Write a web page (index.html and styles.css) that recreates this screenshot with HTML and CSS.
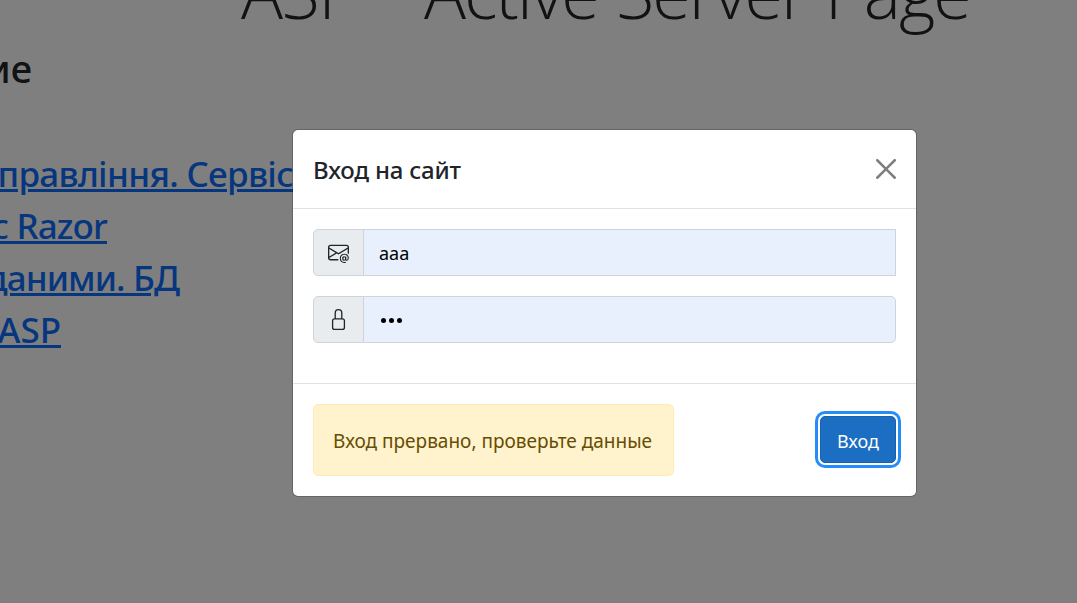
FILE: index.html
```html
<!DOCTYPE html>
<html lang="ru">
<head>
<meta charset="utf-8">
<title>ASP</title>
<link rel="stylesheet" href="styles.css">
</head>
<body>
<main class="page">
  <h1 class="display"><span class="display-abbr">ASP</span><span class="display-name">Active Server Page</span></h1>
  <h2 class="subtitle">ие</h2>
  <nav class="topics">
    <a class="topic topic-services" href="#">управління. Сервіс</a>
    <a class="topic topic-razor" href="#">с Razor</a>
    <a class="topic topic-data" href="#">даними. БД</a>
    <a class="topic topic-asp" href="#">ASP</a>
  </nav>
</main>
<div class="backdrop">
  <section class="modal">
    <header class="modal-header">
      <h5 class="modal-title">Вход на сайт</h5>
      <svg class="close" viewBox="0 0 16 16"><path d="M.293.293a1 1 0 0 1 1.414 0L8 6.586 14.293.293a1 1 0 1 1 1.414 1.414L9.414 8l6.293 6.293a1 1 0 0 1-1.414 1.414L8 9.414l-6.293 6.293a1 1 0 0 1-1.414-1.414L6.586 8 .293 1.707a1 1 0 0 1 0-1.414z"/></svg>
    </header>
    <div class="modal-body">
      <div class="input-group">
        <span class="addon"><svg class="icon" viewBox="0 0 16 16"><path d="M2 2a2 2 0 0 0-2 2v8.01A2 2 0 0 0 2 14h5.5a.5.5 0 0 0 0-1H2a1 1 0 0 1-.966-.741l5.64-3.471L8 9.583l7-4.2V8.5a.5.5 0 0 0 1 0V4a2 2 0 0 0-2-2H2Zm3.708 6.208L1 11.105V5.383l4.708 2.825ZM1 4.217V4a1 1 0 0 1 1-1h12a1 1 0 0 1 1 1v.217l-7 4.2-7-4.2Z"/><path d="M14.247 14.269c1.01 0 1.587-.857 1.587-2.025v-.21C15.834 10.43 14.64 9 12.52 9h-.035C10.42 9 9 10.36 9 12.432v.214C9 14.82 10.438 16 12.358 16h.044c.594 0 1.018-.074 1.237-.175v-.73c-.245.11-.673.18-1.18.18h-.044c-1.334 0-2.571-.788-2.571-2.655v-.157c0-1.657 1.058-2.724 2.64-2.724h.04c1.535 0 2.484 1.05 2.484 2.326v.118c0 .975-.324 1.39-.639 1.39-.232 0-.41-.148-.41-.42v-2.19h-.906v.569h-.03c-.084-.298-.368-.63-.954-.63-.778 0-1.259.555-1.259 1.4v.528c0 .892.49 1.434 1.26 1.434.471 0 .896-.227 1.014-.643h.043c.118.42.617.648 1.12.648Zm-2.453-1.588v-.227c0-.546.227-.791.573-.791.297 0 .572.192.572.708v.367c0 .573-.253.744-.564.744-.354 0-.581-.215-.581-.8Z"/></svg></span>
        <span class="field field-square">aaa</span>
      </div>
      <div class="input-group">
        <span class="addon"><svg class="icon" viewBox="0 0 16 16"><path d="M8 1a2 2 0 0 1 2 2v4H6V3a2 2 0 0 1 2-2zm3 6V3a3 3 0 0 0-6 0v4a2 2 0 0 0-2 2v5a2 2 0 0 0 2 2h6a2 2 0 0 0 2-2V9a2 2 0 0 0-2-2zM5 8h6a1 1 0 0 1 1 1v5a1 1 0 0 1-1 1H5a1 1 0 0 1-1-1V9a1 1 0 0 1 1-1z"/></svg></span>
        <span class="field field-password"><i class="dot"></i><i class="dot"></i><i class="dot"></i></span>
      </div>
    </div>
    <footer class="modal-footer">
      <div class="alert"><span class="alert-text">Вход прервано, проверьте данные</span></div>
      <button class="submit">Вход</button>
    </footer>
  </section>
</div>
</body>
</html>
```
FILE: styles.css
```css
* { box-sizing: border-box; }
body {
  margin: 0;
  width: 1077px;
  height: 603px;
  overflow: hidden;
  background: #fff;
  color: #212529;
  font: 18px/1.5 "Noto Sans", "Open Sans", sans-serif;
}
.page { width: 1077px; height: 603px; overflow: hidden; }
.display {
  display: flex;
  margin: -64px 0 0 241px;
  height: 112px;
  line-height: 112px;
  font-family: "Open Sans", sans-serif;
  font-size: 70px;
  font-weight: 300;
  letter-spacing: -1.9px;
  word-spacing: 2px;
  white-space: nowrap;
}
.display-abbr { width: 183px; letter-spacing: -1.5px; }
.subtitle {
  display: flex;
  justify-content: flex-end;
  width: 32px;
  height: 56px;
  margin: -8px 0 0;
  line-height: 56px;
  font-size: 38px;
  font-weight: 500;
}
.topics {
  display: flex;
  flex-direction: column;
  margin-top: 52px;
  font-size: 35px;
  font-weight: 500;
  letter-spacing: -.9px;
}
.topic {
  display: flex;
  justify-content: flex-end;
  height: 52px;
  line-height: 52px;
  color: #0d6efd;
  white-space: nowrap;
  text-decoration: underline;
  text-decoration-thickness: 3px;
}
.topic-services { width: 293px; letter-spacing: -.7px; }
.topic-razor { width: 107px; }
.topic-data { width: 179px; }
.topic-asp { width: 61px; letter-spacing: 0; }
.backdrop {
  position: absolute;
  top: 0;
  left: 0;
  width: 1077px;
  height: 603px;
  padding: 129px 0 0 292px;
  background: rgba(0, 0, 0, .5);
}
.modal {
  width: 625px;
  height: 368px;
  background: #fff;
  background-clip: padding-box;
  border: 1px solid rgba(0, 0, 0, .2);
  border-radius: 6px;
}
.modal-header {
  display: flex;
  align-items: center;
  justify-content: space-between;
  height: 79px;
  padding: 0 20px;
  border-bottom: 1px solid #dee2e6;
}
.modal-title { margin: 1px 0 0; font-size: 24px; font-weight: 500; letter-spacing: -.2px; }
.close { width: 20px; height: 20px; opacity: .5; }
.modal-body {
  display: flex;
  flex-direction: column;
  gap: 20px;
  height: 174px;
  padding: 20px;
}
.input-group { display: flex; height: 47px; }
.addon {
  display: flex;
  align-items: center;
  justify-content: center;
  width: 51px;
  background: #e9ecef;
  border: 1px solid #ced4da;
  border-radius: 5px 0 0 5px;
}
.icon { width: 21px; height: 21px; fill: #212529; }
.field {
  display: flex;
  align-items: center;
  flex: 1;
  gap: 3px;
  margin-left: -1px;
  padding: 1px 0 0 15px;
  background: #e8f0fe;
  border: 1px solid #ced4da;
  border-radius: 0 5px 5px 0;
  color: #000;
}
.field-square { border-radius: 0; }
.field-password { padding-left: 17px; }
.dot { width: 5px; height: 5px; background: #000; border-radius: 50%; }
.modal-footer {
  display: flex;
  align-items: center;
  justify-content: space-between;
  height: 113px;
  padding: 0 20px;
  border-top: 1px solid #dee2e6;
}
.alert {
  display: flex;
  align-items: center;
  width: 361px;
  height: 72px;
  padding: 3px 0 0 19px;
  background: #fff3cd;
  border: 1px solid #ffecb5;
  border-radius: 5px;
  color: #664d03;
  font-size: 19px;
  white-space: nowrap;
}
.submit {
  width: 76px;
  height: 47px;
  margin: 0 0 1px;
  padding: 3px 0 0;
  background: #1b6ec2;
  border: 1px solid #1861ac;
  border-radius: 5px;
  box-shadow: 0 0 0 2px #fff, 0 0 0 5px #258cfb;
  color: #fff;
  font: inherit;
}
```
